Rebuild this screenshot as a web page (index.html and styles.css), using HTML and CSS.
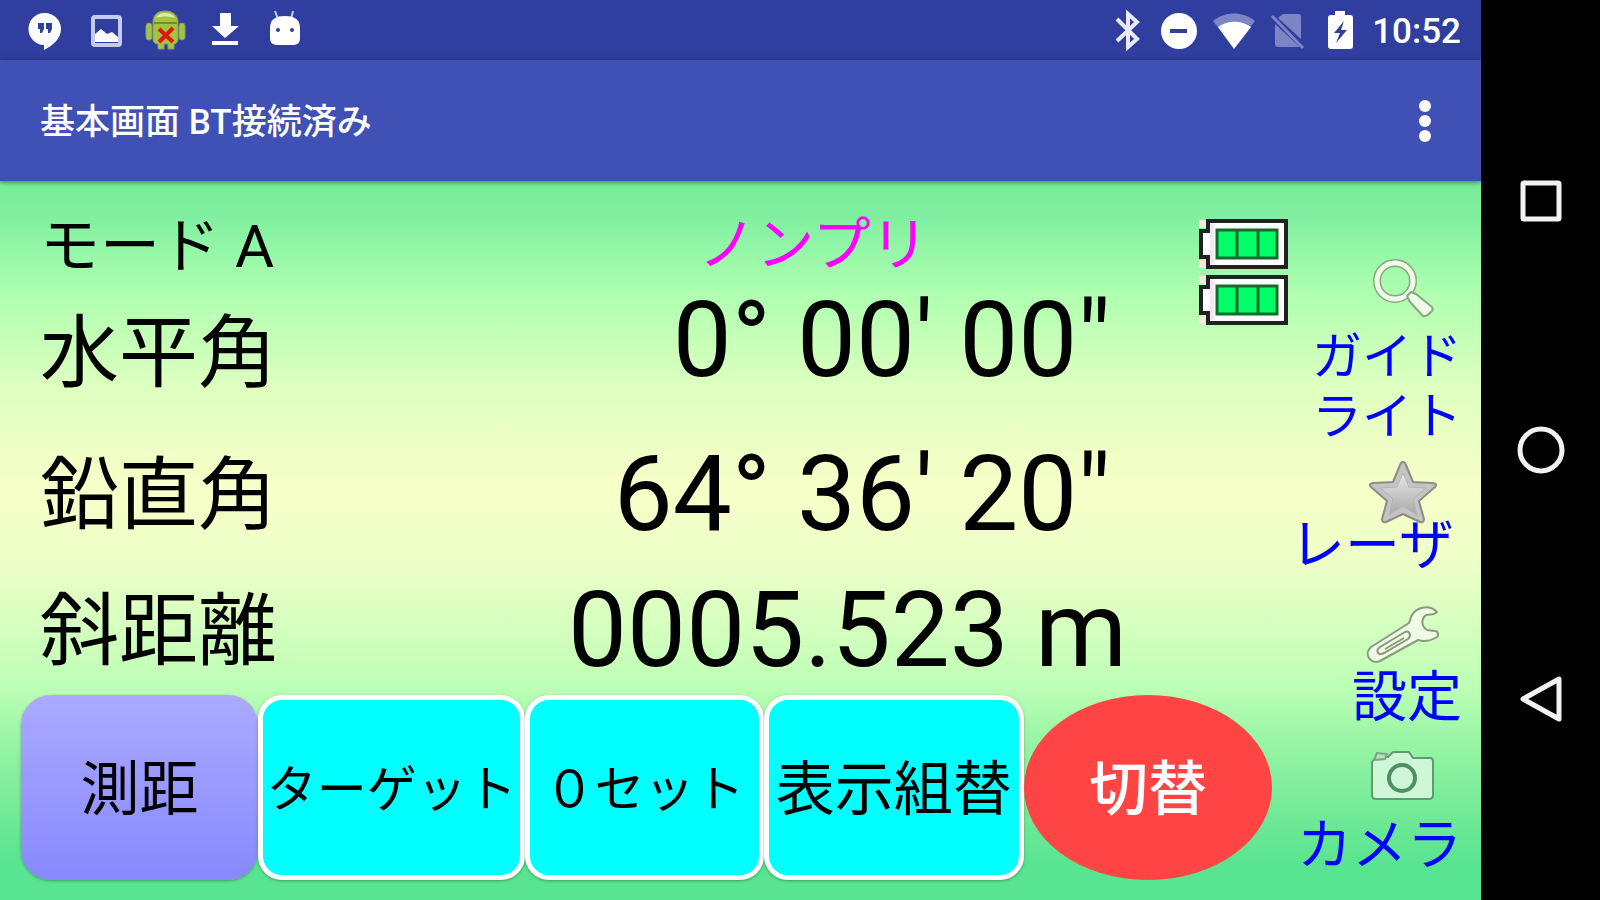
FILE: index.html
```
<!DOCTYPE html>
<html lang="ja">
<head>
    <meta charset="UTF-8">
    <title>基本画面</title>
    <link rel="stylesheet" href="styles.css">
</head>
<body>
    <div class="app">
        <div class="status-bar">
            <div class="status-icons">
                <svg viewBox="0 0 42 42"><path fill="#fff" d="M21 4a16 16 0 0 0-1 32v5c8-4 17-11 17-21A16 16 0 0 0 21 4z"/><path fill="#303f9f" d="M14 14h6v6l-2 4h-2v-4h-2zM22 14h6v6l-2 4h-2v-4h-2z"/></svg>
                <svg viewBox="0 0 42 42"><rect x="9" y="8" width="27" height="28" rx="2" fill="none" stroke="#c5caf0" stroke-width="4"/><path fill="#fff" d="M11 33v-8l6-5 6 5 5-2 6 5v5z"/></svg>
                <svg viewBox="0 0 42 42"><g fill="#a4c440" stroke="#7f9d6b" stroke-width="1"><rect x="2" y="14" width="6" height="17" rx="3"/><rect x="35" y="14" width="6" height="17" rx="3"/><path d="M9 13C9 5 15 2 21 2s13 3 13 11v17c0 3-2 5-4 5v5h-6v-5h-4v5h-6v-5c-3 0-5-2-5-5z"/></g><path fill="#dcebad" d="M12 9c2-4 5-5 9-5s8 1 10 5c-6-2-13-2-19 0z"/><path stroke="#6d8f2c" stroke-width="2" d="M10 14h23"/><path stroke="#e0160c" stroke-width="4" d="M15 20l14 13M29 19L15 33"/></svg>
                <svg viewBox="0 0 42 42"><path fill="#fff" d="M16 4h11v13h8L21 29 8 17h8zM8 32h26v4H8z"/></svg>
                <svg viewBox="0 0 42 42"><path stroke="#c5caf0" stroke-width="2" d="M11 2l3 8M29 2l-2 8"/><path fill="#fff" d="M6 19C6 10 12 7 21 7s15 3 15 12v10c0 5-3 7-7 7H13c-4 0-7-2-7-7z"/><g fill="#303f9f"><circle cx="14" cy="21" r="2"/><circle cx="28" cy="21" r="2"/></g></svg>
            </div>
            <div class="status-icons status-right">
                <svg viewBox="0 0 42 42"><path fill="none" stroke="#e8eaf8" stroke-width="4" d="M10 10l20 20-9 8V5l9 8-20 19"/></svg>
                <svg viewBox="0 0 42 42"><circle cx="19" cy="22" r="18" fill="#fff"/><path stroke="#303f9f" stroke-width="4" d="M10 22h17"/></svg>
                <svg viewBox="0 0 42 42"><path fill="#7c86c6" d="M0 12C12 2 30 2 42 12L21 39z"/><path fill="#fff" d="M5 18c10-7 23-7 33 0L21 40z"/></svg>
                <svg viewBox="0 0 42 42"><path fill="#7c86c6" d="M17 5h15q3 0 3 3v22L12 9zM9 15l25 23H12q-3 0-3-3z"/><path stroke="#7c86c6" stroke-width="3" d="M6 7l31 32"/></svg>
                <svg viewBox="0 0 42 42"><path fill="#fff" d="M16 2h10v4h5q3 0 3 3v28q0 3-3 3H12q-3 0-3-3V9q0-3 3-3h4z"/><path fill="#303f9f" d="M25 12L15 24h6l-4 10 11-13h-6z"/></svg>
                <span class="clock">10:52</span>
            </div>
        </div>

        <header class="title-bar">
            <h1>基本画面 BT接続済み</h1>
            <button type="button" class="menu-btn" aria-label="メニュー">
                <svg viewBox="0 0 12 44"><g fill="#fff"><circle cx="6" cy="7" r="6"/><circle cx="6" cy="22" r="6"/><circle cx="6" cy="37" r="6"/></g></svg>
            </button>
        </header>

        <main class="screen">
            <div class="measure">
                <div class="readings">
                    <div class="mode">モード A</div>
                    <div class="prism">ノンプリ</div>
                    <div class="batteries">
                        <svg viewBox="0 0 90 50"><path fill="#f3e8dc" d="M1 1h8v8H1zM1 41h8v8H1z"/><path fill="#fff" stroke="#222" stroke-width="4" d="M10 2h78v46H10V38H3V12h7z"/><path fill="#f3e8f3" d="M12 5h4v40h-4z"/><path fill="#00ff66" stroke="#146b2c" stroke-width="3" d="M19 11h60v28H19zM39 11v28M60 11v28"/></svg>
                        <svg viewBox="0 0 90 50"><path fill="#f3e8dc" d="M1 1h8v8H1zM1 41h8v8H1z"/><path fill="#fff" stroke="#222" stroke-width="4" d="M10 2h78v46H10V38H3V12h7z"/><path fill="#f3e8f3" d="M12 5h4v40h-4z"/><path fill="#00ff66" stroke="#146b2c" stroke-width="3" d="M19 11h60v28H19zM39 11v28M60 11v28"/></svg>
                    </div>
                    <div class="label">水平角</div>
                    <div class="value angle top">0° 00' 00"</div>
                    <div class="label">鉛直角</div>
                    <div class="value angle">64° 36' 20"</div>
                    <div class="label">斜距離</div>
                    <div class="value">0005.523 m</div>
                </div>

                <div class="actions">
                    <button type="button" class="btn btn-measure">測距</button>
                    <button type="button" class="btn btn-cyan kana">ターゲット</button>
                    <button type="button" class="btn btn-cyan kana">０セット</button>
                    <button type="button" class="btn btn-cyan">表示組替</button>
                    <button type="button" class="btn btn-switch">切替</button>
                </div>
            </div>

            <aside class="side">
                <button type="button" class="side-btn guide">
                    <svg viewBox="0 0 76 64"><g fill="none" stroke-linecap="round"><circle cx="30" cy="25" r="18" stroke="#8aa583" stroke-width="8"/><circle cx="30" cy="25" r="18" stroke="#eefbe6" stroke-width="5"/></g><path fill="#eefbe6" stroke="#8aa583" stroke-width="2" stroke-linejoin="round" d="M42 40l4-4 5 2 16 13q2 3-2 6-4 4-7 3L45 46z"/></svg>
                    <span>ガイド<br>ライト</span>
                </button>
                <button type="button" class="side-btn laser">
                    <svg viewBox="0 0 76 64">
                        <defs><linearGradient id="star" x1="0" y1="0" x2="0" y2="1"><stop offset="0" stop-color="#e8e8e8"/><stop offset="1" stop-color="#a8a8a8"/></linearGradient></defs>
                        <path fill="#c4c4c4" stroke="#8d8d85" stroke-width="2" stroke-linejoin="round" d="M38 2q2 0 3 3l7 17 20 1q5 1 2 4L54 41l5 18q0 4-4 3L38 54 21 62q-4 1-4-3l5-18L6 27q-3-3 2-4l20-1 7-17q1-3 3-3z"/>
                        <path fill="url(#star)" stroke="#b4b4b4" d="M38 13l6 14 17 1-13 11 4 16-14-9-14 9 4-16-13-11 17-1z"/>
                    </svg>
                    <span>レーザ</span>
                </button>
                <button type="button" class="side-btn setting">
                    <svg viewBox="0 0 76 64"><path fill="#eefbe6" stroke="#8a9a7c" stroke-width="2" stroke-linejoin="round" d="M72 9C64 1 50 4 46 14q-1 4-2 6L6 44C-2 51 6 62 15 58l38-21q9 3 19-3c2-2 1-6-2-6l-8-1c-6-4-6-11-1-15l8-1z"/><path fill="none" stroke="#8a9a7c" stroke-width="2" d="M40 29L15 44c-5 4-2 9 4 6l24-14c4-4 1-9-3-7z"/><path stroke="#8a9a7c" stroke-width="2" d="M20 46l19-11"/></svg>
                    <span>設定</span>
                </button>
                <button type="button" class="side-btn camera">
                    <svg viewBox="0 0 76 64"><path fill="#cdf7d6" stroke="#5f9a70" stroke-width="2" stroke-linejoin="round" d="M7 18l4-5h12l5-5h16l4 6h17q3 0 3 3v34q0 4-4 4H11q-4 0-4-4z"/><path fill="#b9dcbc" stroke="#7aa584" stroke-width="2" d="M9 16l3-7 10 1-2 5z"/><circle cx="37" cy="34" r="13" fill="#cdf7d6" stroke="#4f8f66" stroke-width="4"/></svg>
                    <span>カメラ</span>
                </button>
            </aside>
        </main>
    </div>

    <nav class="nav-bar">
        <button type="button" aria-label="履歴"><svg viewBox="0 0 48 48"><rect x="6" y="6" width="36" height="36" rx="1"/></svg></button>
        <button type="button" aria-label="ホーム"><svg viewBox="0 0 48 48"><circle cx="24" cy="24" r="21"/></svg></button>
        <button type="button" aria-label="戻る"><svg viewBox="0 0 48 48"><path d="M42 4v40L6 24z"/></svg></button>
    </nav>
</body>
</html>
```
FILE: styles.css
```
* { box-sizing: border-box; }
body { margin: 0; display: flex; min-height: 100vh; background: #000; font-family: Roboto, "Noto Sans CJK JP", sans-serif; color: #000; }
button { border: 0; padding: 0; background: none; font-family: inherit; color: inherit; cursor: pointer; }
svg { display: block; }

.app { flex: 1; display: flex; flex-direction: column; }

.status-bar { display: flex; justify-content: space-between; align-items: center; height: 60px; padding: 0 20px 0 24px; background: #303f9f; }
.status-icons { display: flex; align-items: center; gap: 18px; }
.status-icons svg { width: 42px; height: 42px; }
.status-right { gap: 11px; }
.clock { padding-top: 4px; color: #fff; font-size: 35px; line-height: 40px; font-weight: 500; }

.title-bar { display: flex; justify-content: space-between; align-items: center; height: 121px; padding: 0 50px 0 40px; background: #3f51b5; box-shadow: 0 1px 5px rgba(0, 0, 0, 0.5); z-index: 1; }
.title-bar h1 { margin: 0; padding-top: 4px; color: #fff; font-size: 35px; line-height: 40px; font-weight: 500; }
.menu-btn svg { width: 12px; height: 44px; }

.screen { flex: 1; display: flex; background: linear-gradient(#76ec9a 0%, #80f0a0 5%, #b0ffb0 16%, #dfffc0 29%, #f8ffc9 43%, #ebffc6 54%, #beffb6 70%, #98f5a5 78%, #76ea98 87%, #58e490 95%, #58e490 100%); }
.measure { flex: 1; display: flex; flex-direction: column; }

.readings { flex: 1; display: grid; grid-template-columns: 460fr 627fr 163fr; grid-template-rows: 63px 148fr 136fr 135fr; padding: 32px 0 0 40px; align-items: center; }
.mode { padding-top: 4px; font-size: 60px; line-height: 60px; }
.prism { font-size: 58px; line-height: 60px; text-align: center; color: #f0f; }
.batteries { grid-column: 3; grid-row: 1 / 3; align-self: start; display: grid; gap: 6px; padding: 6px 0 0 71px; }
.batteries svg { width: 90px; height: 50px; }
.label { grid-column: 1; padding-top: 8px; font-size: 79px; line-height: 80px; }
.value { padding-top: 6px; font-size: 105px; line-height: 124px; text-align: right; white-space: nowrap; }
.angle { padding-right: 16px; }
.top { align-self: start; padding-top: 3px; }

.actions { display: grid; grid-template-columns: 237fr 267fr 238fr 260fr 248fr; padding: 0 18px 20px 21px; }
.btn { height: 185px; padding-bottom: 6px; border-radius: 30px; font-size: 59px; white-space: nowrap; }
.btn-measure { background: linear-gradient(#aaaaff, #8888ff); box-shadow: 0 1px 3px rgba(0, 0, 0, 0.3); }
.btn-cyan { background: #0ff; border: 5px solid #fff; border-radius: 24px; box-shadow: 0 1px 3px rgba(0, 0, 0, 0.3); }
.btn-switch { background: #ff4444; color: #fff; border-radius: 50%; font-weight: 500; }
.kana { font-size: 50px; }

.side { width: 191px; display: grid; grid-template-rows: 204fr 143fr 141fr 156fr; padding: 75px 21px 0 0; }
.side-btn { display: flex; flex-direction: column; align-items: flex-end; color: #00f; font-size: 55px; line-height: 60px; text-align: right; white-space: nowrap; }
.side-btn svg { width: 76px; height: 64px; margin-right: 21px; position: relative; z-index: 1; }
.guide { font-size: 50px; }
.guide span, .camera span { margin-top: 7px; }
.laser span { margin: -9px 8px 0 0; }

.nav-bar { width: 119px; display: flex; flex-direction: column; align-items: center; justify-content: space-around; padding: 76px 0; }
.nav-bar svg { width: 48px; height: 48px; fill: none; stroke: #f2f2f2; stroke-width: 5; stroke-linejoin: round; }
```
